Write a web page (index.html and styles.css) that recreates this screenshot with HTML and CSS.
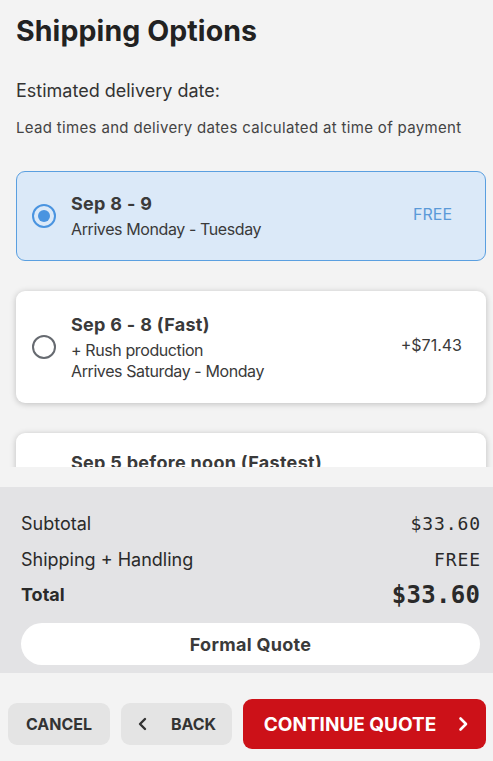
FILE: index.html
```html
<!DOCTYPE html>
<html>
<head>
<meta charset="utf-8">
<link rel="stylesheet" href="styles.css">
</head>
<body>
<div class="page">
  <div class="scroll">
    <h1 class="title">Shipping Options</h1>
    <p class="est">Estimated delivery date:</p>
    <p class="lead">Lead times and delivery dates calculated at time of payment</p>

    <div class="options">
      <div class="option selected">
        <span class="radio checked"><span class="dot"></span></span>
        <div class="info">
          <div class="opt-title">Sep 8 - 9</div>
          <div class="opt-sub">Arrives Monday - Tuesday</div>
        </div>
        <div class="price free">FREE</div>
      </div>

      <div class="option">
        <span class="radio"></span>
        <div class="info">
          <div class="opt-title">Sep 6 - 8 (Fast)</div>
          <div class="opt-sub">+ Rush production</div>
          <div class="opt-sub">Arrives Saturday - Monday</div>
        </div>
        <div class="price">+$71.43</div>
      </div>

      <div class="option fastest">
        <span class="radio"></span>
        <div class="info">
          <div class="opt-title">Sep 5 before noon (Fastest)</div>
          <div class="opt-sub">+ Rush production</div>
          <div class="opt-sub">Arrives Friday</div>
        </div>
        <div class="price">+$120.00</div>
      </div>
    </div>
  </div>

  <div class="summary">
    <div class="row"><span>Subtotal</span><span class="mono">$33.60</span></div>
    <div class="row"><span>Shipping + Handling</span><span class="mono">FREE</span></div>
    <div class="row total"><span>Total</span><span class="mono big">$33.60</span></div>
    <button class="formal">Formal Quote</button>
  </div>

  <div class="footer">
    <button class="btn gray cancel">CANCEL</button>
    <button class="btn gray back">
      <svg width="12" height="14" viewBox="0 0 12 14"><path d="M8 2 L3 7 L8 12" fill="none" stroke="#333" stroke-width="2.4" stroke-linecap="round" stroke-linejoin="round"/></svg>
      <span>BACK</span>
    </button>
    <button class="btn red continue">
      <span>CONTINUE QUOTE</span>
      <svg width="12" height="16" viewBox="0 0 12 16"><path d="M3.5 2.5 L9 8 L3.5 13.5" fill="none" stroke="#fff" stroke-width="2.6" stroke-linecap="round" stroke-linejoin="round"/></svg>
    </button>
  </div>
</div>
</body>
</html>
```

FILE: styles.css
```css
* { box-sizing: border-box; }
html, body { margin: 0; padding: 0; }
body {
  background: #f3f3f3;
  font-family: Inter, "Noto Sans", sans-serif;
  color: #333;
}
.page {
  width: 493px;
  height: 761px;
  display: flex;
  flex-direction: column;
}
.scroll {
  height: 467px;
  overflow: hidden;
  padding: 0 7px 0 16px;
}
.title {
  margin: 13px 0 0;
  font-size: 28.5px;
  line-height: 36px;
  font-weight: 700;
  color: #222;
  letter-spacing: 0.1px;
}
.est {
  margin: 30px 0 0;
  font-size: 18px;
  line-height: 24px;
  color: #333;
}
.lead {
  margin: 15px 0 0;
  font-size: 15px;
  line-height: 20px;
  color: #444;
  letter-spacing: 0.33px;
}
.options {
  margin-top: 33px;
  display: flex;
  flex-direction: column;
  gap: 30px;
}
.option {
  display: flex;
  align-items: center;
  background: #fff;
  border-radius: 9px;
  padding: 20px 23px 20px 15px;
  box-shadow: 0 1px 6px rgba(0,0,0,0.22);
  border: 1px solid transparent;
}
.option.selected {
  background: #dbe9f8;
  border: 1px solid #5a9fe0;
  box-shadow: none;
  padding-top: 19px;
  padding-bottom: 20px;
}
.option.fastest {
  padding-top: 16px;
}
.radio {
  width: 24px;
  height: 24px;
  border-radius: 50%;
  border: 2px solid #666a70;
  flex-shrink: 0;
  display: flex;
  align-items: center;
  justify-content: center;
  margin-right: 15px;
}
.radio.checked { border-color: #4a94e0; }
.radio .dot {
  width: 12px;
  height: 12px;
  border-radius: 50%;
  background: #4a94e0;
}
.info { flex: 1; }
.opt-title {
  font-size: 18px;
  line-height: 26px;
  font-weight: 700;
  color: #3a3a3a;
  margin-bottom: 2px;
  letter-spacing: 0.3px;
}
.opt-sub {
  font-size: 16px;
  line-height: 21px;
  color: #3a3a3a;
  letter-spacing: -0.4px;
}
.price {
  font-size: 16px;
  color: #3a3a3a;
  margin-bottom: 4px;
}
.price.free {
  color: #5a9ad8;
  margin-right: 10px;
}
.summary {
  margin-top: 20px;
  height: 186px;
  background: #e3e3e5;
  padding: 19px 13px 0 21px;
  display: flex;
  flex-direction: column;
}
.row {
  display: flex;
  justify-content: space-between;
  align-items: center;
  font-size: 18px;
  line-height: 24px;
  color: #2a2a2a;
  height: 36px;
}
.row.total {
  height: 34px;
  font-weight: 700;
}
.mono {
  font-family: "DejaVu Sans Mono", "Liberation Mono", monospace;
  font-size: 18px;
  letter-spacing: 0.9px;
  margin-right: -0.9px;
}
.mono.big {
  font-size: 24px;
  font-weight: 700;
  letter-spacing: 0.3px;
  margin-right: -0.3px;
}
.formal {
  margin-top: 11px;
  height: 42px;
  width: 459px;
  border: none;
  border-radius: 21px;
  background: #fff;
  font-family: Inter, sans-serif;
  font-size: 18px;
  font-weight: 700;
  color: #3a3a3a;
  letter-spacing: 0.3px;
}
.footer {
  flex: 1;
  display: flex;
  align-items: center;
  padding: 14px 7px 0 8px;
  gap: 11px;
}
.btn {
  border: none;
  border-radius: 9px;
  font-family: Inter, sans-serif;
  font-weight: 700;
  display: flex;
  align-items: center;
  justify-content: center;
}
.btn.gray {
  background: #e4e4e4;
  color: #333;
  font-size: 16px;
  height: 42px;
}
.cancel { width: 102px; }
.back { width: 111px; gap: 22px; padding-right: 6px; }
.continue {
  flex: 1;
  height: 50px;
  background: #cc1118;
  color: #fff;
  font-size: 19px;
  gap: 21px;
  padding-left: 10px;
  letter-spacing: 0;
}
```
